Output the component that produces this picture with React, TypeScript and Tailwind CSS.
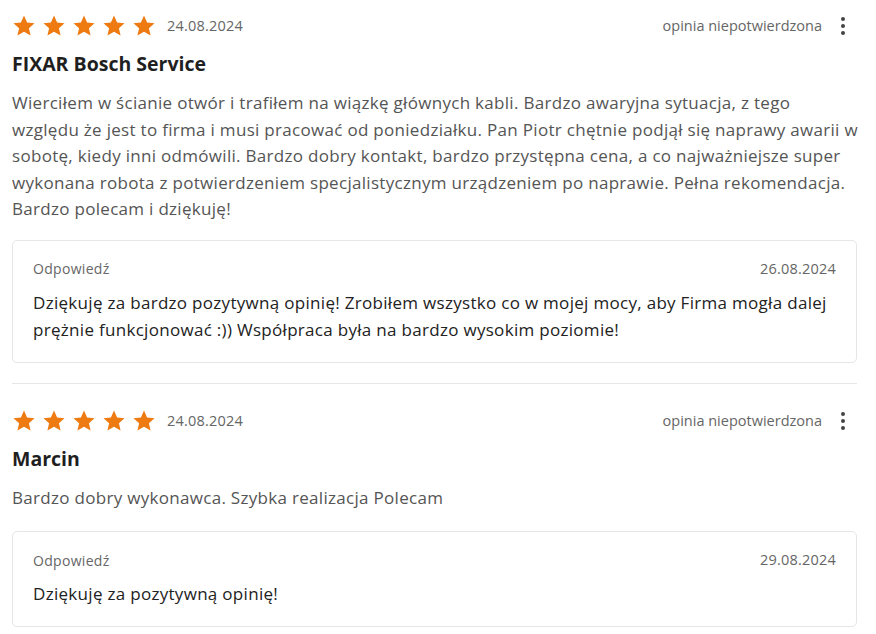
import React from 'react';

type Review = {
  date: string;
  author: string;
  body: string[];
  replyDate: string;
  reply: string[];
};

const reviews: Review[] = [
  {
    date: '24.08.2024',
    author: 'FIXAR Bosch Service',
    body: [
      'Wierciłem w ścianie otwór i trafiłem na wiązkę głównych kabli. Bardzo awaryjna sytuacja, z tego',
      'względu że jest to firma i musi pracować od poniedziałku. Pan Piotr chętnie podjął się naprawy awarii w',
      'sobotę, kiedy inni odmówili. Bardzo dobry kontakt, bardzo przystępna cena, a co najważniejsze super',
      'wykonana robota z potwierdzeniem specjalistycznym urządzeniem po naprawie. Pełna rekomendacja.',
      'Bardzo polecam i dziękuję!',
    ],
    replyDate: '26.08.2024',
    reply: [
      'Dziękuję za bardzo pozytywną opinię! Zrobiłem wszystko co w mojej mocy, aby Firma mogła dalej',
      'prężnie funkcjonować :)) Współpraca była na bardzo wysokim poziomie!',
    ],
  },
  {
    date: '24.08.2024',
    author: 'Marcin',
    body: ['Bardzo dobry wykonawca. Szybka realizacja Polecam'],
    replyDate: '29.08.2024',
    reply: ['Dziękuję za pozytywną opinię!'],
  },
];

function Star() {
  return (
    <svg viewBox="0 0 24 24" className="w-[24px] h-[24px]" fill="#ee7a12">
      <path d="M12 1.6l3.1 6.9 7.4.7-5.6 5 1.7 7.3L12 17.7l-6.6 3.8 1.7-7.3-5.6-5 7.4-.7z" />
    </svg>
  );
}

function Lines({ lines }: { lines: string[] }) {
  return (
    <>
      {lines.map((l, i) => (
        <React.Fragment key={i}>
          {i > 0 && <br />}
          {l}
        </React.Fragment>
      ))}
    </>
  );
}

function ReviewItem({ r, last }: { r: Review; last?: boolean }) {
  return (
    <div className={last ? '' : 'border-b border-[#e6e6e6] pb-[20px] mb-[25px]'}>
      {/* header */}
      <div className="flex items-center h-[24px]">
        <div className="flex gap-[6px]">
          {[0, 1, 2, 3, 4].map((i) => (
            <Star key={i} />
          ))}
        </div>
        <span className="ml-[11px] text-[14.5px] tracking-[0.2px] text-[#666]">{r.date}</span>
        <span className="ml-auto text-[14.5px] text-[#666]">opinia niepotwierdzona</span>
        <div className="ml-[19px] mr-[12px] flex flex-col gap-[3px]">
          <span className="w-[4px] h-[4px] rounded-full bg-[#444]" />
          <span className="w-[4px] h-[4px] rounded-full bg-[#444]" />
          <span className="w-[4px] h-[4px] rounded-full bg-[#444]" />
        </div>
      </div>

      <h3 className="mt-[12px] text-[19.5px] leading-[28px] font-bold text-[#1f1f1f]">{r.author}</h3>
      <p className="mt-[12px] text-[17px] tracking-[0.3px] leading-[26.5px] text-[#555] whitespace-nowrap">
        <Lines lines={r.body} />
      </p>

      {/* reply */}
      <div
        className={`${last ? 'mt-[20px]' : 'mt-[17px]'} border border-[#e6e6e6] rounded-[5px] px-[20px] pt-[18px] pb-[19px]`}
      >
        <div className="flex items-center justify-between h-[20px]">
          <span className="text-[14px] tracking-[0.3px] text-[#666]">Odpowiedź</span>
          <span className="text-[14.5px] tracking-[0.2px] text-[#666]">{r.replyDate}</span>
        </div>
        <p className="mt-[10px] text-[17px] tracking-[0.3px] leading-[27px] text-[#222] whitespace-nowrap">
          <Lines lines={r.reply} />
        </p>
      </div>
    </div>
  );
}

export default function App() {
  return (
    <div className="bg-white min-h-screen font-['Open_Sans',sans-serif]">
      <div className="w-[845px] ml-[12px] pt-[14px]">
        {reviews.map((r, i) => (
          <ReviewItem key={i} r={r} last={i === reviews.length - 1} />
        ))}
      </div>
    </div>
  );
}
